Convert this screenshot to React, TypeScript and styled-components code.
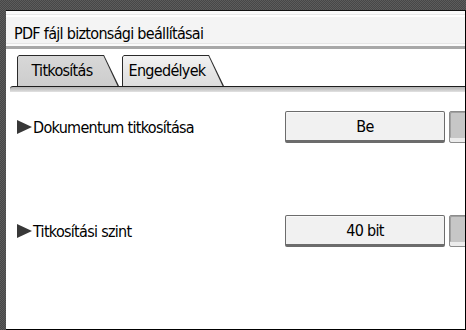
import React from "react";
import styled, { createGlobalStyle } from "styled-components";

const GlobalStyle = createGlobalStyle`
  html, body {
    margin: 0;
    padding: 0;
    background: #505050;
  }
  body {
    font-family: "DejaVu Sans Condensed", "DejaVu Sans", sans-serif;
    font-stretch: condensed;
    letter-spacing: -0.7px;
  }
`;

const Frame = styled.div`
  width: 466px;
  height: 330px;
  box-sizing: border-box;
  padding: 10px 0 0 6px;
  display: flex;
  flex-direction: column;
  background: repeating-conic-gradient(#474747 0 25%, #5c5c5c 0 50%) 0 0 / 2px 2px;
`;

const Panel = styled.div`
  flex: 1;
  display: flex;
  flex-direction: column;
  background: #fff;
  border-top: 1px solid #111;
  border-right: 1px solid #000;
  border-bottom: 1px solid #000;
  overflow: hidden;
`;

const TitleBar = styled.div`
  height: 38px;
  box-sizing: border-box;
  padding: 13px 8px 0;
  background: linear-gradient(
    #fafafa 0,
    #fafafa 3px,
    #e9e9e9 3px,
    #e9e9e9 4px,
    #ffffff 4px,
    #ffffff 6px,
    #f4f4f4 6px,
    #f4f4f4 32px,
    #e6e6e6 32px,
    #e6e6e6 33px,
    #fbfbfb 33px,
    #fbfbfb 35px,
    #eeeeee 35px
  );
  border-bottom: 3px solid #a8a8a8;
  font-size: 16px;
  line-height: 20px;
  color: #000;
`;

const TabBar = styled.div`
  display: flex;
  flex-direction: column;
  padding-top: 6px;
`;

const TabRow = styled.div`
  display: flex;
  gap: 3px;
  padding-left: 11px;
`;

const Tab = styled.div<{ $active?: boolean }>`
  position: relative;
  width: 102px;
  height: 31px;
  box-sizing: border-box;
  padding: 0 12px 0 0;
  display: flex;
  align-items: center;
  justify-content: center;
  font-size: 16px;
  color: #000;

  &::before,
  &::after {
    content: "";
    position: absolute;
    inset: 0;
  }
  &::before {
    background: #2a2a2a;
    clip-path: polygon(0 100%, 0 2px, 2px 0, 87px 0, 102px 100%);
  }
  &::after {
    background: ${(p) =>
      p.$active
        ? "linear-gradient(#d8d8d8, #cdcdcd)"
        : "linear-gradient(#f3f3f3, #e4e4e4 60%, #dddddd)"};
    clip-path: polygon(1px 100%, 1px 2px, 2px 1px, 86.5px 1px, 100.5px 100%);
  }

  span {
    position: relative;
    z-index: 1;
  }
`;

const TabBase = styled.div`
  margin-left: 4px;
  height: 5px;
  border-top: 1px solid #1e1e1e;
  border-top-left-radius: 3px;
  background: linear-gradient(#b4b4b4, #c8c8c8 50%, #e2e2e2);
`;

const Content = styled.div`
  display: flex;
  flex-direction: column;
  gap: 72px;
  padding: 19px 0 0 11px;
`;

const Row = styled.div`
  display: grid;
  grid-template-columns: 264px 160px 160px;
  column-gap: 4px;
  align-items: center;
`;

const Label = styled.div`
  display: flex;
  align-items: center;
  gap: 1px;
  font-size: 16px;
  color: #000;
`;

const Arrow = styled.span`
  width: 0;
  height: 0;
  border-top: 7px solid transparent;
  border-bottom: 7px solid transparent;
  border-left: 15px solid #383838;
`;

const OptionButton = styled.div<{ $pressed?: boolean }>`
  height: 32px;
  box-sizing: border-box;
  display: flex;
  align-items: center;
  justify-content: center;
  font-size: 16px;
  color: #000;
  border-radius: 2px;
  border: 1px solid ${(p) => (p.$pressed ? "#8c8c8c" : "#6c6c6c")};
  border-bottom: ${(p) => (p.$pressed ? "1px solid #8c8c8c" : "3px solid #6c6c6c")};
  background: ${(p) => (p.$pressed ? "#c6c6c6" : "#f1f1f1")};
  box-shadow: ${(p) =>
    p.$pressed
      ? "inset 0 -4px 0 #ececec, inset 1px 1px 0 #a0a0a0"
      : "inset 0 1px 0 #fafafa"};
`;

const settings = [
  { label: "Dokumentum titkosítása", value: "Be" },
  { label: "Titkosítási szint", value: "40 bit" },
];

export default function App() {
  return (
    <>
      <GlobalStyle />
      <Frame>
        <Panel>
          <TitleBar>PDF fájl biztonsági beállításai</TitleBar>
          <TabBar>
            <TabRow>
              <Tab $active>
                <span>Titkosítás</span>
              </Tab>
              <Tab>
                <span>Engedélyek</span>
              </Tab>
            </TabRow>
            <TabBase />
          </TabBar>
          <Content>
            {settings.map((s) => (
              <Row key={s.label}>
                <Label>
                  <Arrow />
                  {s.label}
                </Label>
                <OptionButton>{s.value}</OptionButton>
                <OptionButton $pressed />
              </Row>
            ))}
          </Content>
        </Panel>
      </Frame>
    </>
  );
}
